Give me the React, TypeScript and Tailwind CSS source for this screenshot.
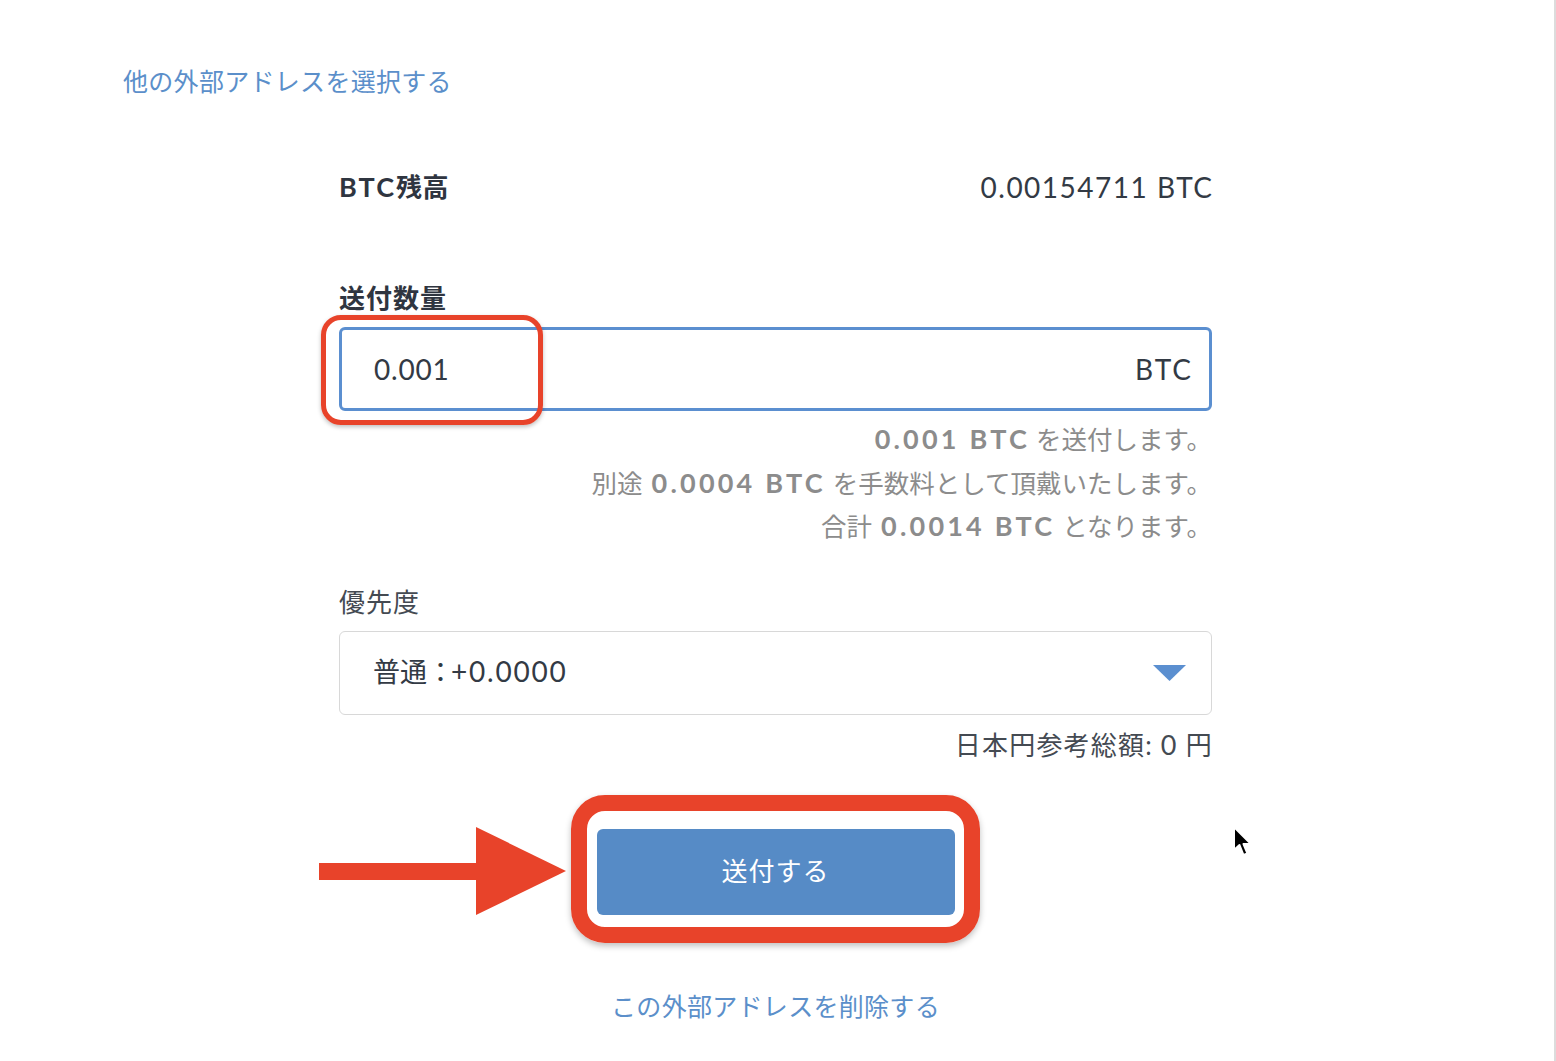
import React from "react";

const font = { fontFamily: 'Lato, "Noto Sans CJK JP", sans-serif' };

export default function App() {
  return (
    <div
      className="relative w-[1556px] h-[1061px] bg-white overflow-hidden border-r-2 border-[#dcdcdc] text-[#333a44]"
      style={font}
    >
      <div className="pt-[63px] pl-[123px]">
        <a className="text-[25px] leading-[36px] text-[#5b8fca] tracking-[0.3px]">他の外部アドレスを選択する</a>
      </div>

      <div className="ml-[339px] w-[873px]">
        <div className="mt-[70px] flex justify-between items-center h-[36px]">
          <span className="text-[26px] leading-[36px] font-bold text-[#2f3540]">
            <span className="text-[27px] leading-none tracking-[2px]">BTC</span>
            <span className="tracking-[0.5px]">残高</span>
          </span>
          <span className="text-[28px] leading-[36px] tracking-[1.5px] mr-[-1.5px] text-[#333a44]">0.00154711 BTC</span>
        </div>

        <div className="mt-[75px] h-[36px] text-[26px] leading-[36px] font-bold tracking-[1px] text-[#2f3540]">送付数量</div>

        <div className="relative mt-[11px] h-[84px] rounded-[6px] border-[3px] border-[#5b8fd0] flex items-center justify-between pl-[32px] pr-[18px]">
          <span className="text-[28px] tracking-[0.8px] text-[#333a44]">0.001</span>
          <span className="text-[28px] tracking-[2px] mr-[-2px] text-[#333a44]">BTC</span>
          <div className="absolute left-[-21px] top-[-15px] w-[222px] h-[110px] rounded-[20px] border-[5px] border-[#e8432a] shadow-[0_2px_4px_rgba(0,0,0,0.25)]" />
        </div>

        <div className="mt-[7px] text-right text-[25.5px] leading-[43.5px] text-[#8c8c8c]">
          <div className="h-[43.5px]">
            <b className="font-bold text-[27px] leading-none tracking-[3.2px] mr-[6px]">0.001 BTC</b>を送付します。
          </div>
          <div className="h-[43.5px]">
            別途<b className="font-bold text-[27px] leading-none tracking-[3.2px] ml-[9px] mr-[7px]">0.0004 BTC</b>を手数料として頂戴いたします。
          </div>
          <div className="h-[43.5px]">
            合計<b className="font-bold text-[27px] leading-none tracking-[3.2px] ml-[9px] mr-[7px]">0.0014 BTC</b>となります。
          </div>
        </div>

        <div className="mt-[35px] h-[36px] text-[26px] leading-[36px] tracking-[1px] text-[#444a52]">優先度</div>

        <div className="mt-[11px] h-[84px] rounded-[6px] border-[1.5px] border-[#d8d8d8] flex items-center justify-between pl-[33px] pr-[25px]">
          <span className="text-[27px] text-[#333a44]">
            普通<span className="tracking-[-3px]">：</span>
            <span className="text-[28px] leading-none tracking-[1.8px]">+0.0000</span>
          </span>
          <svg width="33" height="16" viewBox="0 0 33 16">
            <polygon points="0,0 33,0 16.5,16" fill="#5b8fd0" />
          </svg>
        </div>

        <div className="mt-[12px] h-[36px] text-right text-[26px] leading-[36px] tracking-[1.2px] mr-[-1px] text-[#444a52]">
          日本円参考総額: <span className="text-[27px] leading-none tracking-[1.5px]">0</span> 円
        </div>

        <div className="mt-[66px] flex justify-center">
          <div className="relative">
            <button className="w-[358px] h-[86px] rounded-[6px] bg-[#568bc6] text-white text-[26px] tracking-[1px]">送付する</button>
            <div className="absolute left-[-26px] top-[-34px] w-[409px] h-[148px] rounded-[34px] border-[16px] border-[#e8432a] shadow-[0_3px_6px_rgba(0,0,0,0.25)]" />
            <svg className="absolute left-[-280px] top-[-2px]" width="250" height="90" viewBox="0 0 250 90">
              <rect x="2" y="36" width="162" height="17" fill="#e8432a" />
              <polygon points="159,0 249,44 159,88" fill="#e8432a" />
            </svg>
          </div>
        </div>

        <div className="mt-[73px] text-center">
          <a className="text-[25px] leading-[36px] text-[#5b8fca] tracking-[0.3px]">この外部アドレスを削除する</a>
        </div>
      </div>

      <svg className="absolute left-[1230px] top-[824px]" width="26" height="38" viewBox="0 0 26 38">
        <path d="M4 3 L4 26 L9.5 21 L13.5 31 L17.5 29.5 L13.5 20 L21 20 Z" fill="#000" stroke="#fff" strokeWidth="2" strokeLinejoin="round" />
      </svg>
    </div>
  );
}
